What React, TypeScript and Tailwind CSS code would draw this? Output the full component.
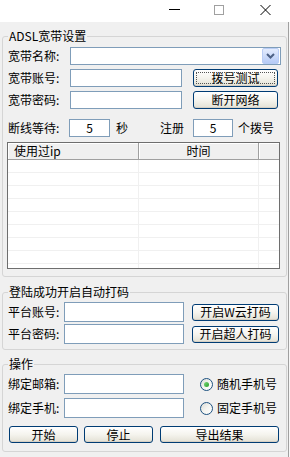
import React from "react";

const font = { fontFamily: '"Noto Sans CJK SC", "Liberation Sans", sans-serif' };

function XpButton({ label, w, h = 17, focus = false }: { label: string; w: number; h?: number; focus?: boolean }) {
  return (
    <button
      type="button"
      style={{ width: w, height: h }}
      className="relative flex shrink-0 items-center justify-center rounded-[3px] border border-[#003c74] bg-gradient-to-b from-white via-[#f5f4ee] to-[#e3e1d5] text-[12px] leading-[14px] text-black shadow-[inset_0_-1px_0_#d6d0c5]"
    >
      {focus && (
        <span className="absolute inset-[2px] border border-dotted border-[#555]"></span>
      )}
      {label}
    </button>
  );
}

function TextBox({ w, h = 18, value = "", center = false }: { w: number; h?: number; value?: string; center?: boolean }) {
  return (
    <div
      style={{ width: w, height: h }}
      className={`flex shrink-0 items-center border border-[#7f9db9] bg-white text-[12px] leading-[14px] ${center ? "justify-center" : ""}`}
    >
      {value}
    </div>
  );
}

function Radio({ checked, label }: { checked?: boolean; label: string }) {
  return (
    <div className="ml-[16px] flex items-center">
      <div className="flex h-[13px] w-[13px] items-center justify-center rounded-full border border-[#1c5180] bg-gradient-to-br from-[#dcdcd6] via-[#f4f4f0] to-white">
        {checked && (
          <div className="h-[5px] w-[5px] rounded-full bg-gradient-to-br from-[#7bd67b] to-[#21a121]"></div>
        )}
      </div>
      <span className="ml-[4px] whitespace-nowrap text-[12px] leading-[14px]">{label}</span>
    </div>
  );
}

export default function App() {
  const rows = Array.from({ length: 9 });
  return (
    <div style={font} className="h-[457px] w-[290px] overflow-hidden bg-[#f7f7f7] text-black">
      {/* title bar */}
      <div className="flex h-[22px] w-[290px] items-start bg-white">
        <div className="ml-[169px] mt-[9px] h-px w-[11px] bg-black"></div>
        <div className="ml-[34px] mt-[5px] h-[10px] w-[10px] border border-[#a0a0a0]"></div>
        <svg className="ml-[36px] mt-[5px]" width="11" height="10" viewBox="0 0 11 10">
          <path d="M0.5 0 L10.5 10 M10.5 0 L0.5 10" stroke="#000" strokeWidth="1" />
        </svg>
      </div>

      <div className="h-[435px] w-[289px] border-r border-[#a0a0a0] bg-[#f0f0f0] pt-[7px]">
        {/* ADSL group */}
        <fieldset className="ml-[2px] w-[285px] rounded-[3px] border border-[#d5d5d5] pb-[7px] pl-[5px] pt-[4px]">
          <legend className="px-[1px] text-[12px] leading-[14px]">ADSL宽带设置</legend>
          <div className="flex h-[18px] items-center">
            <span className="w-[62px] shrink-0 whitespace-nowrap text-[12px] leading-[14px]">宽带名称:</span>
            <div className="flex h-[18px] w-[211px] items-center justify-end border border-[#7f9db9] bg-white">
              <div className="mr-px flex h-[16px] w-[17px] items-center justify-center rounded-[2px] border border-[#b9cdf5] bg-gradient-to-b from-[#e4ecfd] to-[#b6cbf6]">
                <svg width="9" height="6" viewBox="0 0 9 6">
                  <path d="M1 1 L4.5 4.5 L8 1" stroke="#4d6185" strokeWidth="2" fill="none" />
                </svg>
              </div>
            </div>
          </div>
          <div className="mt-[4px] flex h-[18px] items-center">
            <span className="w-[62px] shrink-0 whitespace-nowrap text-[12px] leading-[14px]">宽带账号:</span>
            <TextBox w={112} />
            <div className="ml-[11px]">
              <XpButton label="拨号测试" w={85} h={18} focus />
            </div>
          </div>
          <div className="mt-[4px] flex h-[18px] items-center">
            <span className="w-[62px] shrink-0 whitespace-nowrap text-[12px] leading-[14px]">宽带密码:</span>
            <TextBox w={112} />
            <div className="ml-[11px]">
              <XpButton label="断开网络" w={85} h={18} />
            </div>
          </div>
          <div className="mt-[10px] flex h-[18px] items-center whitespace-nowrap text-[12px] leading-[14px]">
            <span className="w-[61px] shrink-0">断线等待:</span>
            <TextBox w={41} value="5" center />
            <span className="ml-[6px]">秒</span>
            <span className="ml-[32px]">注册</span>
            <div className="ml-[9px]">
              <TextBox w={40} value="5" center />
            </div>
            <span className="ml-[5px]">个拨号</span>
          </div>
          {/* list view */}
          <div className="-ml-px mt-[5px] h-[127px] w-[273px] overflow-hidden border border-[#6e6e6e] bg-white">
            <div className="flex h-[17px] text-[12px] leading-[14px]">
              <div className="flex w-[131px] items-center border-b border-r border-[#a0a0a0] bg-[#f0f0f0] pl-[6px] shadow-[inset_1px_1px_0_#ffffff]">
                使用过ip
              </div>
              <div className="flex w-[120px] items-center justify-center border-b border-r border-[#a0a0a0] bg-[#f0f0f0] shadow-[inset_1px_1px_0_#ffffff]">
                时间
              </div>
              <div className="flex-1 border-b border-[#a0a0a0] bg-[#f0f0f0] shadow-[inset_1px_1px_0_#ffffff]"></div>
            </div>
            {rows.map((_, i) => (
              <div key={i} className="flex h-[13px] border-b border-[#f0f0f0]">
                <div className="w-[131px] border-r border-[#f0f0f0]"></div>
                <div className="w-[120px] border-r border-[#f0f0f0]"></div>
                <div className="flex-1"></div>
              </div>
            ))}
          </div>
        </fieldset>

        {/* captcha group */}
        <fieldset className="ml-[2px] mt-[8px] w-[285px] rounded-[3px] border border-[#d5d5d5] pb-[5px] pl-[5px] pt-[3px]">
          <legend className="px-[1px] text-[12px] leading-[14px]">登陆成功开启自动打码</legend>
          <div className="flex h-[20px] items-center">
            <span className="w-[56px] shrink-0 whitespace-nowrap text-[12px] leading-[14px]">平台账号:</span>
            <TextBox w={120} h={20} />
            <div className="ml-[8px]">
              <XpButton label="开启W云打码" w={87} />
            </div>
          </div>
          <div className="mt-[2px] flex h-[20px] items-center">
            <span className="w-[56px] shrink-0 whitespace-nowrap text-[12px] leading-[14px]">平台密码:</span>
            <TextBox w={120} h={20} />
            <div className="ml-[8px]">
              <XpButton label="开启超人打码" w={87} />
            </div>
          </div>
        </fieldset>

        {/* operation group */}
        <fieldset className="ml-[2px] mt-[7px] w-[285px] rounded-[3px] border border-[#d5d5d5] pb-[8px] pl-[5px] pt-[3px]">
          <legend className="px-[1px] text-[12px] leading-[14px]">操作</legend>
          <div className="flex h-[20px] items-center">
            <span className="w-[56px] shrink-0 whitespace-nowrap text-[12px] leading-[14px]">绑定邮箱:</span>
            <TextBox w={120} h={20} />
            <Radio checked label="随机手机号" />
          </div>
          <div className="mt-[4px] flex h-[20px] items-center">
            <span className="w-[56px] shrink-0 whitespace-nowrap text-[12px] leading-[14px]">绑定手机:</span>
            <TextBox w={120} h={20} />
            <Radio label="固定手机号" />
          </div>
          <div className="mt-[8px] flex h-[17px] items-center">
            <div className="ml-px">
              <XpButton label="开始" w={69} />
            </div>
            <div className="ml-[6px]">
              <XpButton label="停止" w={69} />
            </div>
            <div className="ml-[7px]">
              <XpButton label="导出结果" w={119} />
            </div>
          </div>
        </fieldset>
      </div>
    </div>
  );
}
